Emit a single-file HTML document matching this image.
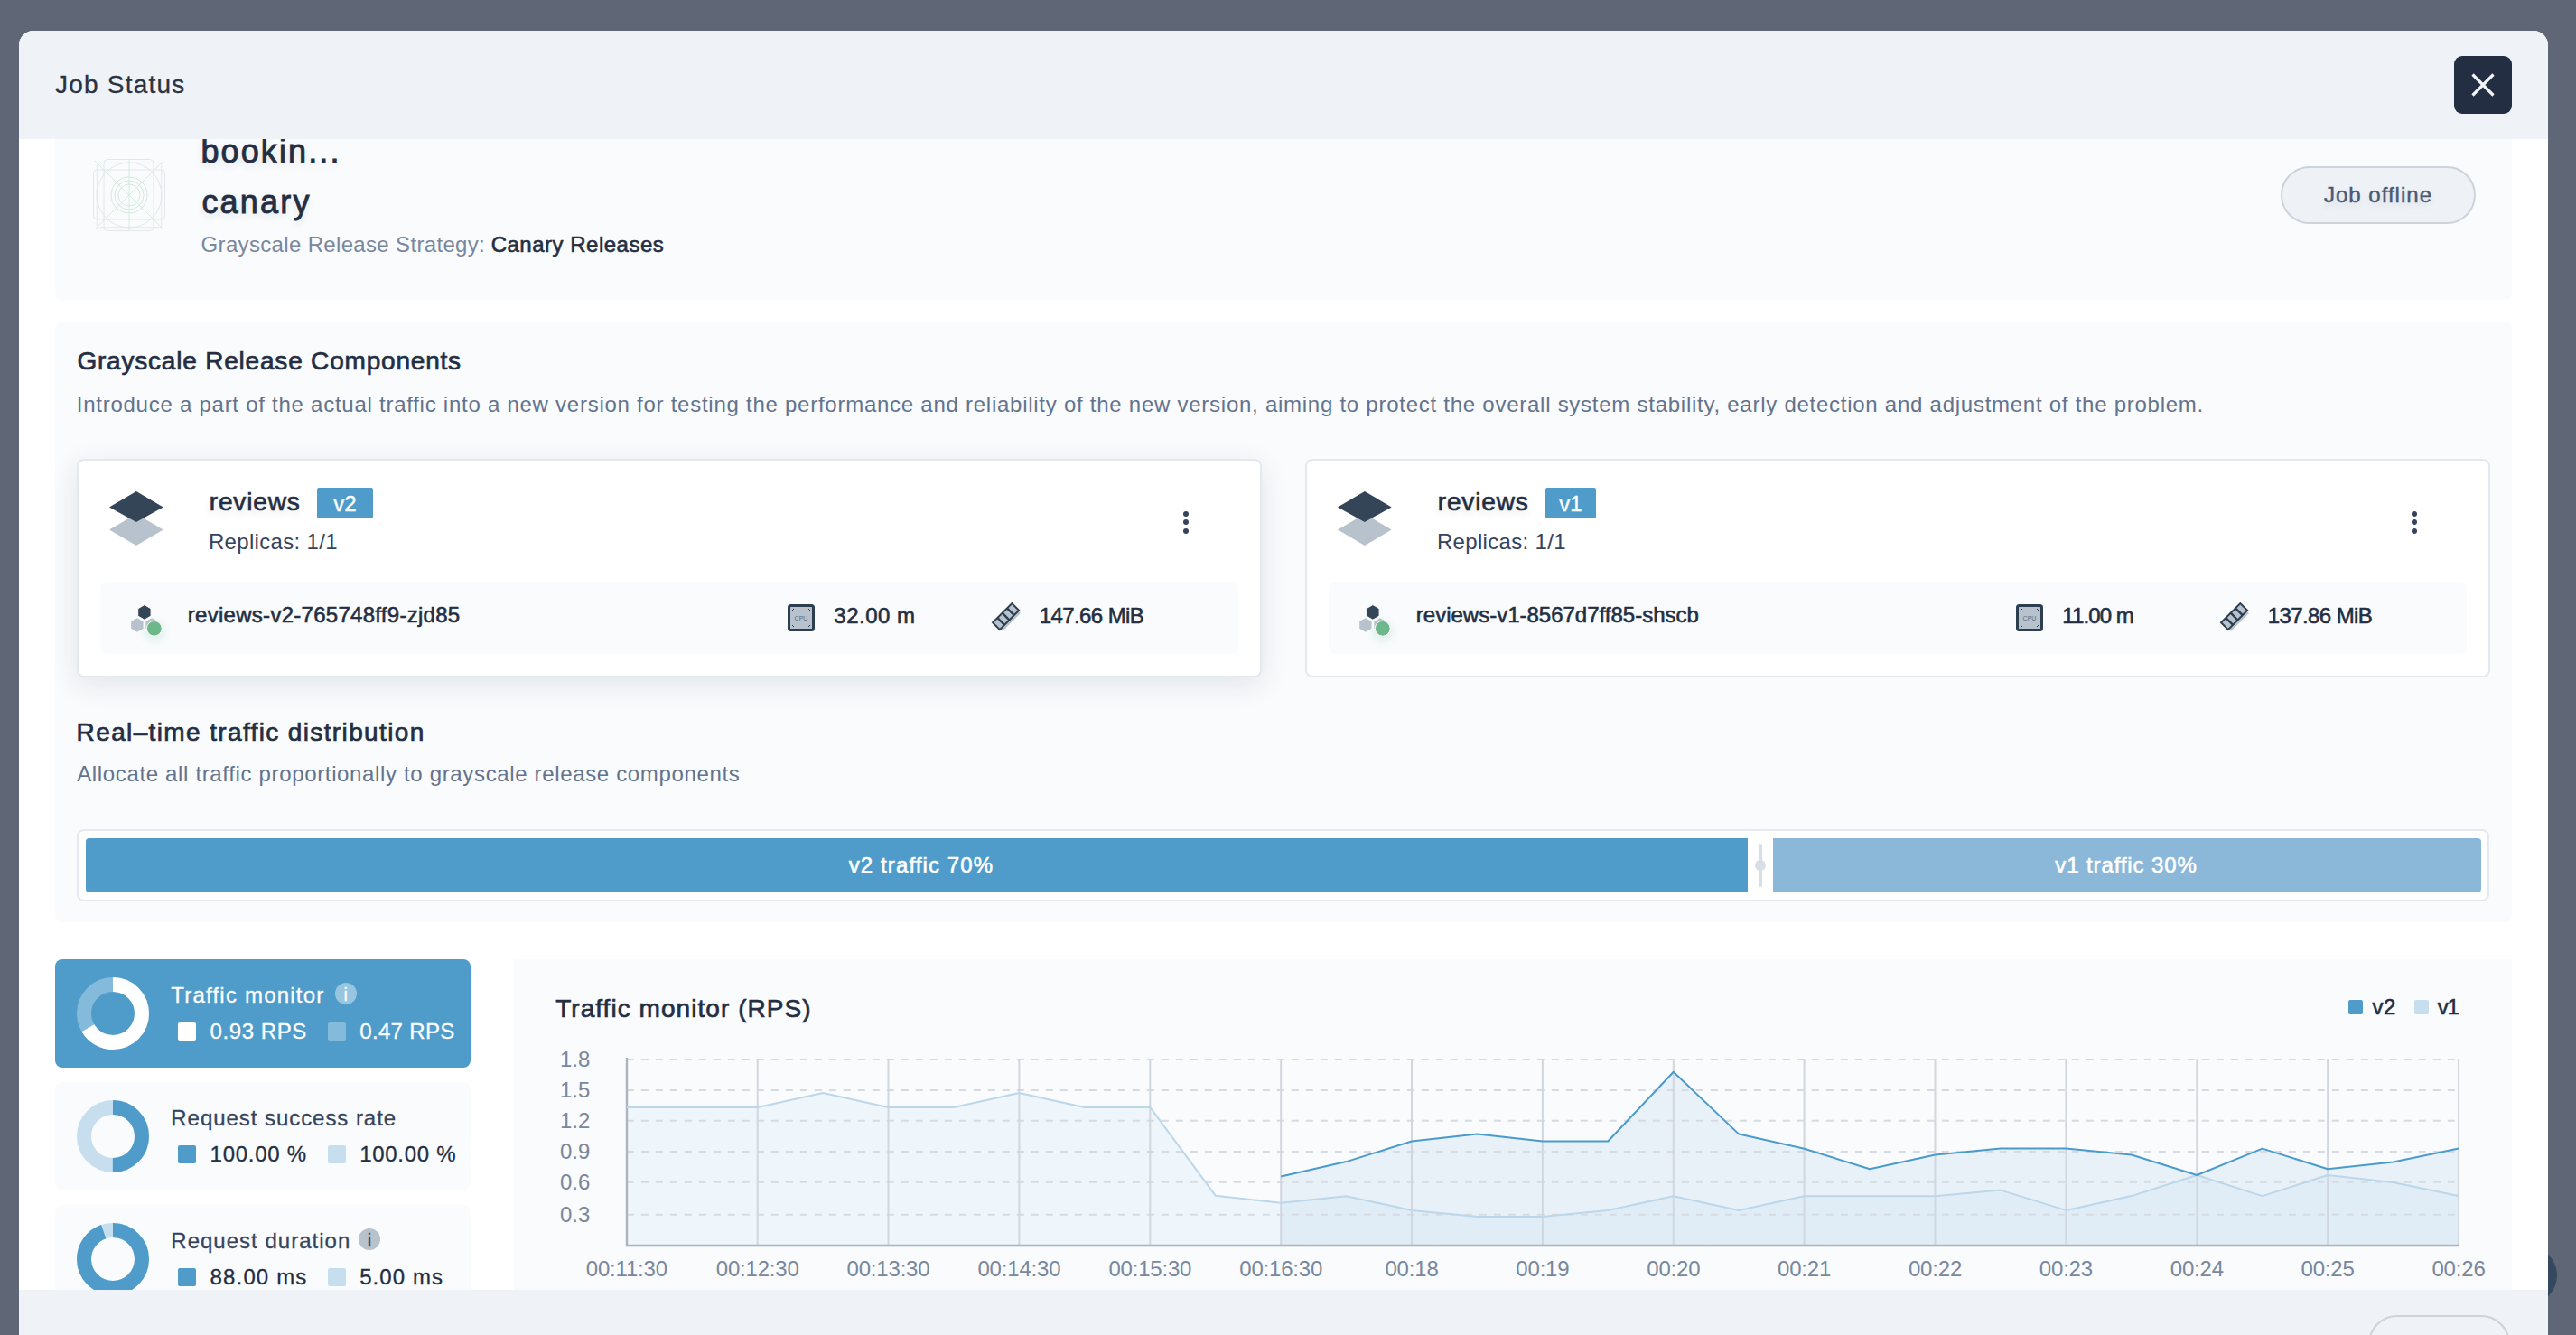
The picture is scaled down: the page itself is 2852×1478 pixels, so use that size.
<!DOCTYPE html>
<html><head><meta charset="utf-8">
<style>
html,body{margin:0;padding:0;}
body{width:2852px;height:1478px;overflow:hidden;background:#5f6675;font-family:"Liberation Sans",sans-serif;position:relative;color:#242e42;}
.a{position:absolute;}
.t{position:absolute;line-height:1;white-space:pre;}
.ts{text-shadow:0 4px 8px rgba(36,46,66,0.12);}
svg{position:absolute;overflow:visible;}
</style></head><body>

<div class="a" style="left:2767px;top:1380px;width:64px;height:64px;border-radius:50%;background:#34495f;"></div>
<div class="a" style="left:21px;top:34px;width:2800px;height:1566px;background:#fff;border-radius:16px;"></div>
<div class="a" style="left:61px;top:120px;width:2720px;height:212px;background:#f9fbfd;border-radius:8px;"></div>
<svg style="left:103px;top:176px" width="80" height="80" viewBox="0 0 80 80">
<g fill="none" stroke-width="0.9">
<rect x="12" y="0.5" width="55" height="79" rx="4" stroke="#dfe4ea"/>
<rect x="0.5" y="12" width="79" height="55" rx="4" stroke="#dfe4ea"/>
<rect x="4.3" y="4.3" width="71.4" height="71.4" rx="2" stroke="#e3e7ec"/>
<circle cx="40" cy="40" r="36" stroke="#dfe4ea"/>
<circle cx="40" cy="40" r="20" stroke="#cfe6d7"/>
<circle cx="40" cy="40" r="16" stroke="#cfe6d7"/>
<circle cx="40" cy="40" r="12" stroke="#cfe6d7"/>
<path d="M2 2L78 78M78 2L2 78" stroke="#d3ead9"/>
<path d="M40 0V80" stroke="#d3ead9"/>
</g></svg>
<div class="t ts" style="left:222.4px;top:149.8px;font-size:36px;color:#242e42;letter-spacing:2.12px;-webkit-text-stroke:0.9px #242e42;">bookin...</div>
<div class="t ts" style="left:223.4px;top:205.7px;font-size:36px;color:#242e42;letter-spacing:2.2px;-webkit-text-stroke:0.9px #242e42;">canary</div>
<div class="t " style="left:222.6px;top:259.3px;font-size:24px;color:#79879c;letter-spacing:0.335px;">Grayscale Release Strategy:</div>
<div class="t " style="left:543.7px;top:259.3px;font-size:24px;color:#242e42;letter-spacing:0.5px;-webkit-text-stroke:0.6px #242e42;">Canary Releases</div>
<div class="a" style="left:2525px;top:184px;width:216px;height:64px;box-sizing:border-box;border:2px solid #ccd3db;border-radius:32px;background:#eef2f6;"></div>
<div class="t ts" style="left:2133.0px;width:1000px;text-align:center;top:203.8px;font-size:24px;color:#4a5974;letter-spacing:1.0px;-webkit-text-stroke:0.45px #4a5974;">Job offline</div>
<div class="a" style="left:21px;top:34px;width:2800px;height:120px;background:#eff2f6;border-radius:16px 16px 0 0;"></div>
<div class="t " style="left:61.0px;top:80.3px;font-size:28px;color:#2b3340;letter-spacing:1.22px;-webkit-text-stroke:0.3px #2b3340;">Job Status</div>
<div class="a" style="left:2717px;top:62px;width:64px;height:64px;background:#242e42;border-radius:9px;"></div>
<svg style="left:2717px;top:62px" width="64" height="64" viewBox="0 0 64 64"><path d="M20.5 20.5L43.5 43.5M43.5 20.5L20.5 43.5" stroke="#f2f4f7" stroke-width="3.2" fill="none"/></svg>
<div class="a" style="left:61px;top:356px;width:2720px;height:665px;background:#f9fbfd;border-radius:8px;"></div>
<div class="t " style="left:85.4px;top:386.3px;font-size:28px;color:#242e42;letter-spacing:0.8px;-webkit-text-stroke:0.7px #242e42;">Grayscale Release Components</div>
<div class="t " style="left:84.8px;top:435.7px;font-size:24px;color:#63738d;letter-spacing:0.742px;">Introduce a part of the actual traffic into a new version for testing the performance and reliability of the new version, aiming to protect the overall system stability, early detection and adjustment of the problem.</div>
<div class="a" style="left:85px;top:508px;width:1312px;height:242px;box-sizing:border-box;background:#fff;border:2px solid #e3e9ef;border-radius:8px;box-shadow:0 8px 32px rgba(36,46,66,0.11);"></div>
<svg style="left:121px;top:544px" width="60" height="60" viewBox="0 0 60 60">
<path d="M0 42.5L29.9 25 59.7 42.5 29.9 60Z" fill="#b7c2cd"/>
<path d="M0 17.4L29.9 0 59.7 17.4 29.9 34Z" fill="#344558"/>
</svg>
<div class="t ts" style="left:231.8px;top:542.3px;font-size:28px;color:#242e42;letter-spacing:0.83px;-webkit-text-stroke:0.7px #242e42;">reviews</div>
<div class="a" style="left:351px;top:540px;width:62px;height:34px;background:#4f9cca;border-radius:2px;"></div>
<div class="t " style="left:-118.0px;width:1000px;text-align:center;top:546.2px;font-size:24px;color:#fff;-webkit-text-stroke:0.4px #fff;">v2</div>
<div class="t " style="left:230.9px;top:587.7px;font-size:24px;color:#36435c;letter-spacing:0.33px;">Replicas: 1/1</div>
<div class="a" style="left:1309.7px;top:565.7px;width:6.0px;height:6.0px;background:#36435c;border-radius:50%;"></div>
<div class="a" style="left:1309.7px;top:575.2px;width:6.0px;height:6.0px;background:#36435c;border-radius:50%;"></div>
<div class="a" style="left:1309.7px;top:584.7px;width:6.0px;height:6.0px;background:#36435c;border-radius:50%;"></div>
<div class="a" style="left:111px;top:644px;width:1260px;height:80px;background:#f9fbfd;border-radius:8px;"></div>
<svg style="left:140px;top:665px" width="44" height="44" viewBox="0 0 44 44">
<defs><filter id="gl0" x="-1" y="-1" width="3" height="3"><feGaussianBlur stdDeviation="4"/></filter></defs>
<circle cx="31" cy="34" r="11" fill="#55bc8a" opacity="0.16" filter="url(#gl0)"/>
<g stroke="#fff" stroke-width="1" stroke-linejoin="round">
<path transform="translate(19.9 12.9)" d="M0 -8.3L7.19 -4.15 7.19 4.15 0 8.3 -7.19 4.15 -7.19 -4.15Z" fill="#344558"/>
<path transform="translate(11.9 27)" d="M0 -8.3L7.19 -4.15 7.19 4.15 0 8.3 -7.19 4.15 -7.19 -4.15Z" fill="#b7c2cd"/>
<path transform="translate(28 27)" d="M0 -8.3L7.19 -4.15 7.19 4.15 0 8.3 -7.19 4.15 -7.19 -4.15Z" fill="#b7c2cd"/>
</g>
<circle cx="30.8" cy="30.8" r="8.4" fill="#6db88a" stroke="#fff" stroke-width="1"/>
</svg>
<div class="t " style="left:207.8px;top:668.7px;font-size:24px;color:#242e42;letter-spacing:0.28px;-webkit-text-stroke:0.6px #242e42;">reviews-v2-765748ff9-zjd85</div>
<svg style="left:872px;top:669px" width="30" height="30" viewBox="0 0 30 30">
<rect x="1.5" y="1.5" width="27" height="27" rx="2" fill="#b7c2cd" stroke="#2d3e50" stroke-width="3"/>
<path d="M5 7L7 5M25 7L23 5M5 23L7 25M25 23L23 25" stroke="#36435c" stroke-width="1"/>
<text x="15" y="17.5" font-size="7" text-anchor="middle" fill="#5c6a7d" font-family="Liberation Sans">CPU</text>
</svg>
<div class="t " style="left:923.3px;top:669.7px;font-size:24px;color:#242e42;letter-spacing:0.5px;-webkit-text-stroke:0.6px #242e42;">32.00 m</div>
<svg style="left:1098px;top:667px" width="34" height="34" viewBox="0 0 34 34">
<g transform="translate(17 17) rotate(-45)">
<rect x="-14" y="-1" width="28" height="8" fill="#b7c2cd"/>
<rect x="-15" y="-7.5" width="30" height="11" fill="#b7c2cd" stroke="#2d3e50" stroke-width="2"/>
<path d="M-7.5 -7.5V3.5M0 -7.5V3.5M7.5 -7.5V3.5" stroke="#2d3e50" stroke-width="2.4"/>
</g></svg>
<div class="t " style="left:1150.8px;top:669.7px;font-size:24px;color:#242e42;letter-spacing:-0.6px;-webkit-text-stroke:0.6px #242e42;">147.66 MiB</div>
<div class="a" style="left:1445px;top:508px;width:1312px;height:242px;box-sizing:border-box;background:#fff;border:2px solid #e3e9ef;border-radius:8px;"></div>
<svg style="left:1481px;top:544px" width="60" height="60" viewBox="0 0 60 60">
<path d="M0 42.5L29.9 25 59.7 42.5 29.9 60Z" fill="#b7c2cd"/>
<path d="M0 17.4L29.9 0 59.7 17.4 29.9 34Z" fill="#344558"/>
</svg>
<div class="t ts" style="left:1591.8px;top:542.3px;font-size:28px;color:#242e42;letter-spacing:0.83px;-webkit-text-stroke:0.7px #242e42;">reviews</div>
<div class="a" style="left:1711px;top:540px;width:56px;height:34px;background:#4f9cca;border-radius:2px;"></div>
<div class="t " style="left:1239.0px;width:1000px;text-align:center;top:546.2px;font-size:24px;color:#fff;-webkit-text-stroke:0.4px #fff;">v1</div>
<div class="t " style="left:1590.9px;top:587.7px;font-size:24px;color:#36435c;letter-spacing:0.33px;">Replicas: 1/1</div>
<div class="a" style="left:2669.7px;top:565.7px;width:6.0px;height:6.0px;background:#36435c;border-radius:50%;"></div>
<div class="a" style="left:2669.7px;top:575.2px;width:6.0px;height:6.0px;background:#36435c;border-radius:50%;"></div>
<div class="a" style="left:2669.7px;top:584.7px;width:6.0px;height:6.0px;background:#36435c;border-radius:50%;"></div>
<div class="a" style="left:1471px;top:644px;width:1260px;height:80px;background:#f9fbfd;border-radius:8px;"></div>
<svg style="left:1500px;top:665px" width="44" height="44" viewBox="0 0 44 44">
<defs><filter id="gl1360" x="-1" y="-1" width="3" height="3"><feGaussianBlur stdDeviation="4"/></filter></defs>
<circle cx="31" cy="34" r="11" fill="#55bc8a" opacity="0.16" filter="url(#gl1360)"/>
<g stroke="#fff" stroke-width="1" stroke-linejoin="round">
<path transform="translate(19.9 12.9)" d="M0 -8.3L7.19 -4.15 7.19 4.15 0 8.3 -7.19 4.15 -7.19 -4.15Z" fill="#344558"/>
<path transform="translate(11.9 27)" d="M0 -8.3L7.19 -4.15 7.19 4.15 0 8.3 -7.19 4.15 -7.19 -4.15Z" fill="#b7c2cd"/>
<path transform="translate(28 27)" d="M0 -8.3L7.19 -4.15 7.19 4.15 0 8.3 -7.19 4.15 -7.19 -4.15Z" fill="#b7c2cd"/>
</g>
<circle cx="30.8" cy="30.8" r="8.4" fill="#6db88a" stroke="#fff" stroke-width="1"/>
</svg>
<div class="t " style="left:1567.8px;top:668.7px;font-size:24px;color:#242e42;-webkit-text-stroke:0.6px #242e42;">reviews-v1-8567d7ff85-shscb</div>
<svg style="left:2232px;top:669px" width="30" height="30" viewBox="0 0 30 30">
<rect x="1.5" y="1.5" width="27" height="27" rx="2" fill="#b7c2cd" stroke="#2d3e50" stroke-width="3"/>
<path d="M5 7L7 5M25 7L23 5M5 23L7 25M25 23L23 25" stroke="#36435c" stroke-width="1"/>
<text x="15" y="17.5" font-size="7" text-anchor="middle" fill="#5c6a7d" font-family="Liberation Sans">CPU</text>
</svg>
<div class="t " style="left:2283.3px;top:669.7px;font-size:24px;color:#242e42;letter-spacing:-0.9px;-webkit-text-stroke:0.6px #242e42;">11.00 m</div>
<svg style="left:2458px;top:667px" width="34" height="34" viewBox="0 0 34 34">
<g transform="translate(17 17) rotate(-45)">
<rect x="-14" y="-1" width="28" height="8" fill="#b7c2cd"/>
<rect x="-15" y="-7.5" width="30" height="11" fill="#b7c2cd" stroke="#2d3e50" stroke-width="2"/>
<path d="M-7.5 -7.5V3.5M0 -7.5V3.5M7.5 -7.5V3.5" stroke="#2d3e50" stroke-width="2.4"/>
</g></svg>
<div class="t " style="left:2510.8px;top:669.7px;font-size:24px;color:#242e42;letter-spacing:-0.6px;-webkit-text-stroke:0.6px #242e42;">137.86 MiB</div>
<div class="t " style="left:84.6px;top:797.3px;font-size:28px;color:#242e42;letter-spacing:1.37px;-webkit-text-stroke:0.7px #242e42;">Real–time traffic distribution</div>
<div class="t " style="left:85.2px;top:845.2px;font-size:24px;color:#63738d;letter-spacing:0.652px;">Allocate all traffic proportionally to grayscale release components</div>
<div class="a" style="left:85px;top:918px;width:2671px;height:80px;box-sizing:border-box;background:#fff;border:2px solid #e3e9ef;border-radius:8px;"></div>
<div class="a" style="left:95px;top:928px;width:1840px;height:60px;background:#4f9cca;border-radius:4px 0 0 4px;"></div>
<div class="a" style="left:1963px;top:928px;width:784px;height:60px;background:#8bb7d9;border-radius:0 4px 4px 0;"></div>
<div class="a" style="left:1947px;top:934px;width:4px;height:48px;background:#d8dee6;border-radius:2px;"></div>
<div class="a" style="left:1943px;top:951.6px;width:12px;height:12.0px;background:#d8dee6;border-radius:50%;"></div>
<div class="t " style="left:520.0px;width:1000px;text-align:center;top:945.8px;font-size:24px;color:#fff;letter-spacing:1.11px;-webkit-text-stroke:0.6px #fff;">v2 traffic 70%</div>
<div class="t " style="left:1854.0px;width:1000px;text-align:center;top:945.8px;font-size:24px;color:#fff;letter-spacing:0.88px;-webkit-text-stroke:0.6px #fff;">v1 traffic 30%</div>
<div class="a" style="left:61px;top:1062px;width:460px;height:120px;background:#4f9cca;border-radius:8px;"></div>
<svg style="left:85px;top:1082px" width="80" height="80" viewBox="0 0 80 80">
<circle cx="40" cy="40" r="32" fill="none" stroke="rgba(255,255,255,0.3)" stroke-width="16"/>
<circle cx="40" cy="40" r="32" fill="none" stroke="#fff" stroke-width="16" stroke-dasharray="133.56 201.06" transform="rotate(-90 40 40)"/>
</svg>
<div class="t " style="left:189.3px;top:1089.7px;font-size:24px;color:#fff;letter-spacing:1.21px;-webkit-text-stroke:0.3px #fff;">Traffic monitor</div>
<div class="a" style="left:370.7px;top:1088px;width:24px;height:24px;border-radius:50%;background:rgba(255,255,255,0.42);"></div>
<div class="t " style="left:-117.3px;width:1000px;text-align:center;top:1090.6px;font-size:20px;color:#fff;-webkit-text-stroke:0.3px #fff;">i</div>
<div class="a" style="left:197px;top:1132px;width:20px;height:20px;background:#fff;border-radius:2px;"></div>
<div class="t " style="left:232.6px;top:1129.5px;font-size:24px;color:#fff;letter-spacing:0.57px;-webkit-text-stroke:0.3px #fff;">0.93 RPS</div>
<div class="a" style="left:363px;top:1132px;width:20px;height:20px;background:rgba(255,255,255,0.3);border-radius:2px;"></div>
<div class="t " style="left:398.2px;top:1129.5px;font-size:24px;color:#fff;letter-spacing:0.34px;-webkit-text-stroke:0.3px #fff;">0.47 RPS</div>
<div class="a" style="left:61px;top:1198px;width:460px;height:120px;background:#f9fbfd;border-radius:8px;"></div>
<svg style="left:85px;top:1218px" width="80" height="80" viewBox="0 0 80 80">
<circle cx="40" cy="40" r="32" fill="none" stroke="#c7deef" stroke-width="16"/>
<circle cx="40" cy="40" r="32" fill="none" stroke="#4f9cca" stroke-width="16" stroke-dasharray="100.53 201.06" transform="rotate(-90 40 40)"/>
</svg>
<div class="t " style="left:189.3px;top:1225.7px;font-size:24px;color:#36435c;letter-spacing:0.95px;-webkit-text-stroke:0.3px #36435c;">Request success rate</div>
<div class="a" style="left:197px;top:1268px;width:20px;height:20px;background:#4f9cca;border-radius:2px;"></div>
<div class="t " style="left:232.6px;top:1265.5px;font-size:24px;color:#242e42;letter-spacing:0.71px;-webkit-text-stroke:0.3px #242e42;">100.00 %</div>
<div class="a" style="left:363px;top:1268px;width:20px;height:20px;background:#c7deef;border-radius:2px;"></div>
<div class="t " style="left:398.2px;top:1265.5px;font-size:24px;color:#242e42;letter-spacing:0.71px;-webkit-text-stroke:0.3px #242e42;">100.00 %</div>
<div class="a" style="left:61px;top:1334px;width:460px;height:120px;background:#f9fbfd;border-radius:8px;"></div>
<svg style="left:85px;top:1354px" width="80" height="80" viewBox="0 0 80 80">
<circle cx="40" cy="40" r="32" fill="none" stroke="#c7deef" stroke-width="16"/>
<circle cx="40" cy="40" r="32" fill="none" stroke="#4f9cca" stroke-width="16" stroke-dasharray="190.25 201.06" transform="rotate(-90 40 40)"/>
</svg>
<div class="t " style="left:189.3px;top:1361.7px;font-size:24px;color:#36435c;letter-spacing:1.01px;-webkit-text-stroke:0.3px #36435c;">Request duration</div>
<div class="a" style="left:397px;top:1360px;width:24px;height:24px;border-radius:50%;background:#b7c2cd;"></div>
<div class="t " style="left:-91.0px;width:1000px;text-align:center;top:1362.6px;font-size:20px;color:#36435c;-webkit-text-stroke:0.3px #36435c;">i</div>
<div class="a" style="left:197px;top:1404px;width:20px;height:20px;background:#4f9cca;border-radius:2px;"></div>
<div class="t " style="left:232.6px;top:1401.5px;font-size:24px;color:#242e42;letter-spacing:1.14px;-webkit-text-stroke:0.3px #242e42;">88.00 ms</div>
<div class="a" style="left:363px;top:1404px;width:20px;height:20px;background:#c7deef;border-radius:2px;"></div>
<div class="t " style="left:398.2px;top:1401.5px;font-size:24px;color:#242e42;letter-spacing:1.08px;-webkit-text-stroke:0.3px #242e42;">5.00 ms</div>
<div class="a" style="left:569px;top:1062px;width:2212px;height:438px;background:#f9fbfd;"></div>
<div class="t " style="left:615.2px;top:1102.6px;font-size:28px;color:#242e42;letter-spacing:1.05px;-webkit-text-stroke:0.7px #242e42;">Traffic monitor (RPS)</div>
<div class="a" style="left:2600px;top:1107px;width:16px;height:16px;background:#4f9cca;border-radius:2px;"></div>
<div class="t " style="left:2626.6px;top:1103.4px;font-size:24px;color:#242e42;letter-spacing:0.4px;-webkit-text-stroke:0.6px #242e42;">v2</div>
<div class="a" style="left:2673px;top:1107px;width:16px;height:16px;background:#c7deef;border-radius:2px;"></div>
<div class="t " style="left:2698.8px;top:1103.4px;font-size:24px;color:#242e42;letter-spacing:-1.2px;-webkit-text-stroke:0.6px #242e42;">v1</div>
<svg style="left:0;top:0" width="2852" height="1478" viewBox="0 0 2852 1478">
<path d="M1418.2 1302.5 L1490.6 1286.1 L1563.0 1263.5 L1635.5 1255.6 L1707.9 1263.5 L1780.3 1263.5 L1852.8 1186.7 L1925.2 1255.6 L1997.6 1271.7 L2070.1 1294.3 L2142.5 1278.5 L2214.9 1271.6 L2287.4 1271.6 L2359.8 1278.5 L2432.3 1301.0 L2504.7 1271.6 L2577.1 1294.3 L2649.6 1286.4 L2722.0 1271.6 L2722.0 1379 L1418.2 1379 Z" fill="#c7deef" fill-opacity="0.33"/>
<path d="M693.8 1225.9 L766.2 1225.9 L838.7 1225.9 L911.1 1210.0 L983.5 1225.9 L1056.0 1225.9 L1128.4 1210.0 L1200.8 1225.9 L1273.3 1225.9 L1345.7 1323.7 L1418.2 1331.8 L1490.6 1324.2 L1563.0 1340.0 L1635.5 1347.0 L1707.9 1347.0 L1780.3 1340.0 L1852.8 1324.2 L1925.2 1340.0 L1997.6 1324.2 L2070.1 1324.2 L2142.5 1324.2 L2214.9 1317.6 L2287.4 1339.9 L2359.8 1324.1 L2432.3 1301.0 L2504.7 1324.1 L2577.1 1301.0 L2649.6 1309.0 L2722.0 1324.1 L2722.0 1379 L693.8 1379 Z" fill="#a9d5f0" fill-opacity="0.13"/>
<path d="M693.8 1172.9H2722" stroke="#d6dbe2" stroke-width="2" stroke-dasharray="8 8"/>
<path d="M693.8 1207.0H2722" stroke="#d6dbe2" stroke-width="2" stroke-dasharray="8 8"/>
<path d="M693.8 1240.8H2722" stroke="#d6dbe2" stroke-width="2" stroke-dasharray="8 8"/>
<path d="M693.8 1275.0H2722" stroke="#d6dbe2" stroke-width="2" stroke-dasharray="8 8"/>
<path d="M693.8 1308.7H2722" stroke="#d6dbe2" stroke-width="2" stroke-dasharray="8 8"/>
<path d="M693.8 1344.8H2722" stroke="#d6dbe2" stroke-width="2" stroke-dasharray="8 8"/>
<path d="M838.7 1172V1378" stroke="#d1d7df" stroke-width="2"/>
<path d="M983.5 1172V1378" stroke="#d1d7df" stroke-width="2"/>
<path d="M1128.4 1172V1378" stroke="#d1d7df" stroke-width="2"/>
<path d="M1273.3 1172V1378" stroke="#d1d7df" stroke-width="2"/>
<path d="M1418.2 1172V1378" stroke="#d1d7df" stroke-width="2"/>
<path d="M1563.0 1172V1378" stroke="#d1d7df" stroke-width="2"/>
<path d="M1707.9 1172V1378" stroke="#d1d7df" stroke-width="2"/>
<path d="M1852.8 1172V1378" stroke="#d1d7df" stroke-width="2"/>
<path d="M1997.6 1172V1378" stroke="#d1d7df" stroke-width="2"/>
<path d="M2142.5 1172V1378" stroke="#d1d7df" stroke-width="2"/>
<path d="M2287.4 1172V1378" stroke="#d1d7df" stroke-width="2"/>
<path d="M2432.3 1172V1378" stroke="#d1d7df" stroke-width="2"/>
<path d="M2577.1 1172V1378" stroke="#d1d7df" stroke-width="2"/>
<path d="M2722.0 1172V1378" stroke="#d1d7df" stroke-width="2"/>
<path d="M694 1171V1379H2722" stroke="#abb4bf" stroke-width="2.4" fill="none"/>
<path d="M693.8 1225.9 L766.2 1225.9 L838.7 1225.9 L911.1 1210.0 L983.5 1225.9 L1056.0 1225.9 L1128.4 1210.0 L1200.8 1225.9 L1273.3 1225.9 L1345.7 1323.7 L1418.2 1331.8 L1490.6 1324.2 L1563.0 1340.0 L1635.5 1347.0 L1707.9 1347.0 L1780.3 1340.0 L1852.8 1324.2 L1925.2 1340.0 L1997.6 1324.2 L2070.1 1324.2 L2142.5 1324.2 L2214.9 1317.6 L2287.4 1339.9 L2359.8 1324.1 L2432.3 1301.0 L2504.7 1324.1 L2577.1 1301.0 L2649.6 1309.0 L2722.0 1324.1" stroke="#bcd6ea" stroke-width="2" fill="none" stroke-linejoin="round"/>
<path d="M1418.2 1302.5 L1490.6 1286.1 L1563.0 1263.5 L1635.5 1255.6 L1707.9 1263.5 L1780.3 1263.5 L1852.8 1186.7 L1925.2 1255.6 L1997.6 1271.7 L2070.1 1294.3 L2142.5 1278.5 L2214.9 1271.6 L2287.4 1271.6 L2359.8 1278.5 L2432.3 1301.0 L2504.7 1271.6 L2577.1 1294.3 L2649.6 1286.4 L2722.0 1271.6" stroke="#4a9bcc" stroke-width="2" fill="none" stroke-linejoin="round"/>
</svg>
<div class="t " style="left:-346.7px;width:1000px;text-align:right;top:1160.9px;font-size:24px;color:#79879c;">1.8</div>
<div class="t " style="left:-346.7px;width:1000px;text-align:right;top:1195.0px;font-size:24px;color:#79879c;">1.5</div>
<div class="t " style="left:-346.7px;width:1000px;text-align:right;top:1228.8px;font-size:24px;color:#79879c;">1.2</div>
<div class="t " style="left:-346.7px;width:1000px;text-align:right;top:1263.0px;font-size:24px;color:#79879c;">0.9</div>
<div class="t " style="left:-346.7px;width:1000px;text-align:right;top:1296.7px;font-size:24px;color:#79879c;">0.6</div>
<div class="t " style="left:-346.7px;width:1000px;text-align:right;top:1332.8px;font-size:24px;color:#79879c;">0.3</div>
<div class="t " style="left:193.8px;width:1000px;text-align:center;top:1392.7px;font-size:24px;color:#79879c;letter-spacing:-0.2px;">00:11:30</div>
<div class="t " style="left:338.7px;width:1000px;text-align:center;top:1392.7px;font-size:24px;color:#79879c;letter-spacing:-0.2px;">00:12:30</div>
<div class="t " style="left:483.5px;width:1000px;text-align:center;top:1392.7px;font-size:24px;color:#79879c;letter-spacing:-0.2px;">00:13:30</div>
<div class="t " style="left:628.4px;width:1000px;text-align:center;top:1392.7px;font-size:24px;color:#79879c;letter-spacing:-0.2px;">00:14:30</div>
<div class="t " style="left:773.3px;width:1000px;text-align:center;top:1392.7px;font-size:24px;color:#79879c;letter-spacing:-0.2px;">00:15:30</div>
<div class="t " style="left:918.2px;width:1000px;text-align:center;top:1392.7px;font-size:24px;color:#79879c;letter-spacing:-0.2px;">00:16:30</div>
<div class="t " style="left:1063.0px;width:1000px;text-align:center;top:1392.7px;font-size:24px;color:#79879c;letter-spacing:-0.2px;">00:18</div>
<div class="t " style="left:1207.9px;width:1000px;text-align:center;top:1392.7px;font-size:24px;color:#79879c;letter-spacing:-0.2px;">00:19</div>
<div class="t " style="left:1352.8px;width:1000px;text-align:center;top:1392.7px;font-size:24px;color:#79879c;letter-spacing:-0.2px;">00:20</div>
<div class="t " style="left:1497.6px;width:1000px;text-align:center;top:1392.7px;font-size:24px;color:#79879c;letter-spacing:-0.2px;">00:21</div>
<div class="t " style="left:1642.5px;width:1000px;text-align:center;top:1392.7px;font-size:24px;color:#79879c;letter-spacing:-0.2px;">00:22</div>
<div class="t " style="left:1787.4px;width:1000px;text-align:center;top:1392.7px;font-size:24px;color:#79879c;letter-spacing:-0.2px;">00:23</div>
<div class="t " style="left:1932.3px;width:1000px;text-align:center;top:1392.7px;font-size:24px;color:#79879c;letter-spacing:-0.2px;">00:24</div>
<div class="t " style="left:2077.1px;width:1000px;text-align:center;top:1392.7px;font-size:24px;color:#79879c;letter-spacing:-0.2px;">00:25</div>
<div class="t " style="left:2222.0px;width:1000px;text-align:center;top:1392.7px;font-size:24px;color:#79879c;letter-spacing:-0.2px;">00:26</div>
<div class="a" style="left:21px;top:1428px;width:2800px;height:72px;background:#eff2f6;"></div>
<div class="a" style="left:2622px;top:1456px;width:157px;height:64px;box-sizing:border-box;border:2px solid #ccd3db;border-radius:32px;"></div>
</body></html>
